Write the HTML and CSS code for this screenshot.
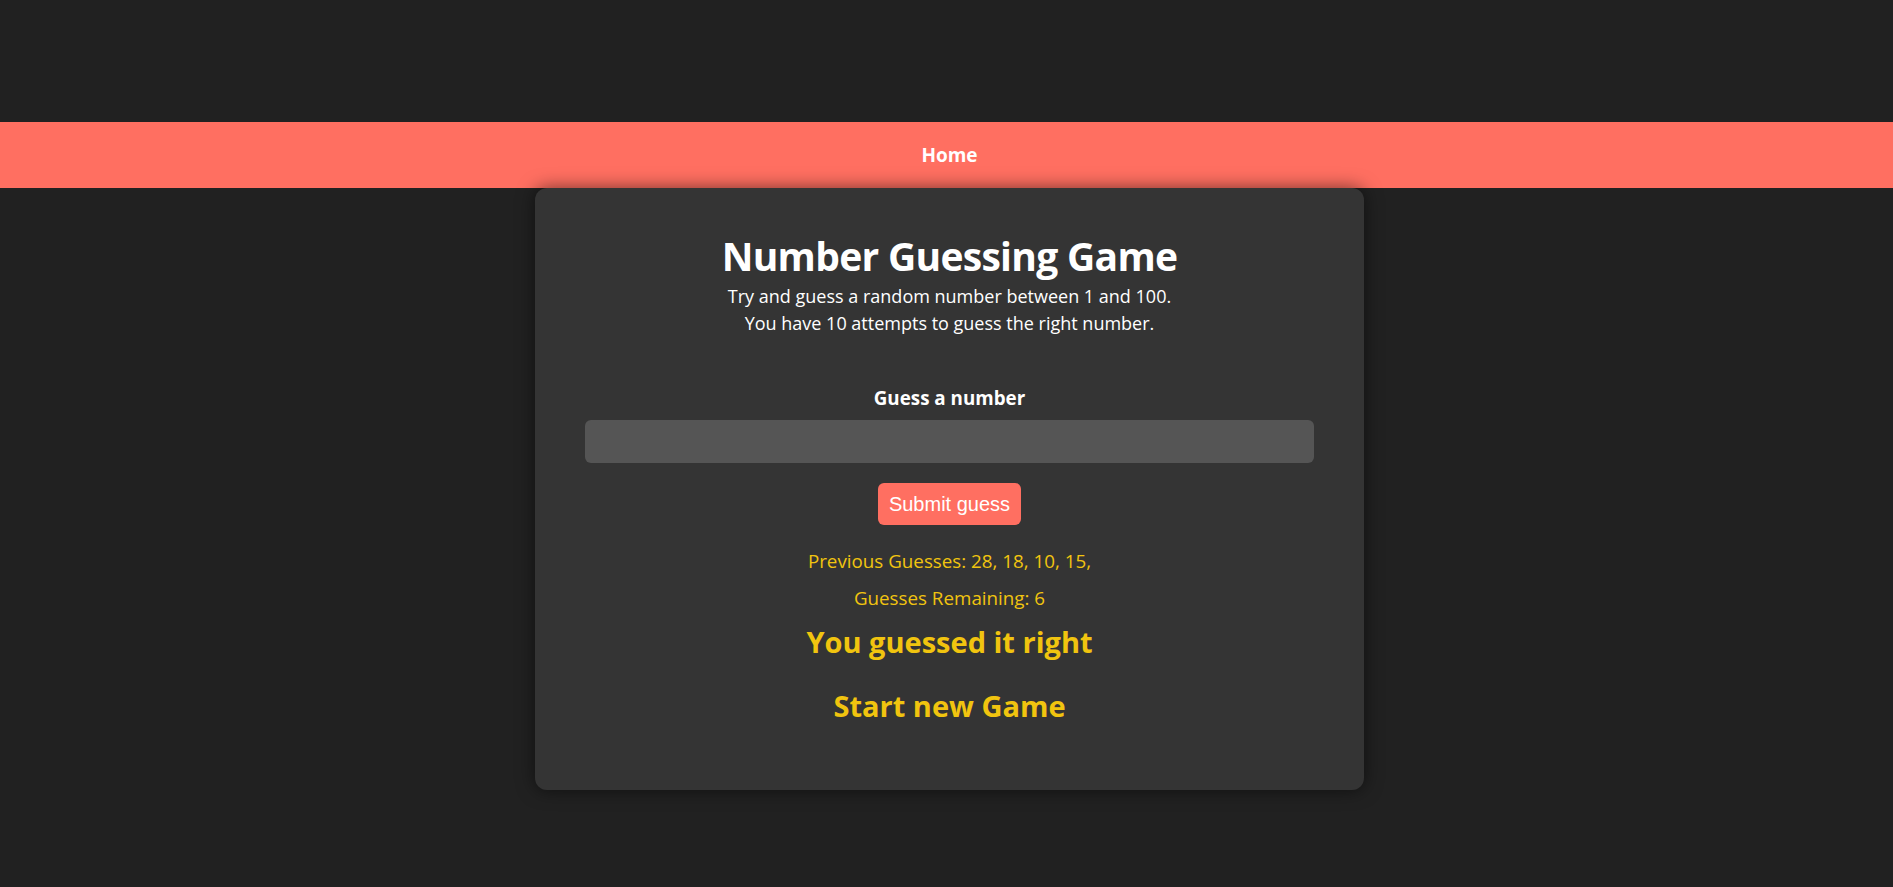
FILE: index.html
```html
<!DOCTYPE html>
<html lang="en">
<head>
<meta charset="utf-8">
<title>Number Guessing Game</title>
<link rel="stylesheet" href="styles.css">
</head>
<body>
<header class="topbar">
  <nav class="nav">
    <a class="nav-link" href="#">Home</a>
  </nav>
</header>
<main class="page">
  <section class="card">
    <h1 class="title">Number Guessing Game</h1>
    <p class="intro">Try and guess a random number between 1 and 100.<br>You have 10 attempts to guess the right number.</p>
    <form class="form">
      <label class="label" for="guess">Guess a number</label>
      <input class="field" id="guess" type="text">
      <button class="submit" type="button">Submit guess</button>
    </form>
    <p class="info first">Previous Guesses: 28, 18, 10, 15,</p>
    <p class="info">Guesses Remaining: 6</p>
    <h2 class="result">You guessed it right</h2>
    <h2 class="result restart">Start new Game</h2>
  </section>
</main>
</body>
</html>
```
FILE: styles.css
```css
html, body {
  margin: 0;
  padding: 0;
}
body {
  background: #212121;
  color: #ffffff;
  font-family: "Open Sans", "Noto Sans", sans-serif;
  min-height: 100vh;
}
.topbar {
  padding-top: 122px;
}
.nav {
  background: #ff6f61;
  height: 66px;
  padding-left: 6px;
  display: flex;
  align-items: center;
  justify-content: center;
}
.nav-link {
  color: #ffffff;
  text-decoration: none;
  font-weight: 700;
  font-size: 19px;
}
.page {
  display: flex;
  justify-content: center;
  padding-left: 6px;
}
.card {
  position: relative;
  width: 829px;
  box-sizing: border-box;
  background: #343434;
  border-radius: 12px;
  box-shadow: 0 0 18px rgba(0, 0, 0, 0.55);
  padding: 44px 50px 67px;
  text-align: center;
}
.title {
  margin: 0;
  font-size: 39px;
  line-height: 48px;
  font-weight: 700;
  letter-spacing: -0.7px;
}
.intro {
  margin: 3px 0 0;
  font-size: 18px;
  line-height: 27px;
}
.form {
  margin-top: 48px;
  display: flex;
  flex-direction: column;
  align-items: center;
}
.label {
  font-size: 18.8px;
  line-height: 27px;
  font-weight: 700;
}
.field {
  margin-top: 8px;
  width: 100%;
  height: 43px;
  box-sizing: border-box;
  background: #555555;
  border: none;
  border-radius: 6px;
  color: #fff;
  font-size: 18px;
  padding: 0 12px;
}
.submit {
  margin-top: 20px;
  height: 42px;
  padding: 0 11px;
  background: #ff6f61;
  color: #ffffff;
  border: none;
  border-radius: 6px;
  font-family: "Liberation Sans", Arial, sans-serif;
  font-size: 20px;
}
.info {
  color: #f1c40f;
  font-size: 18.8px;
  line-height: 27px;
  margin: 10px 0 0;
}
.info.first {
  margin-top: 23px;
}
.result {
  color: #f1c40f;
  margin: 12px 0 0;
  font-size: 29px;
  line-height: 35px;
  font-weight: 700;
}
.result.restart {
  margin-top: 29px;
}
```
